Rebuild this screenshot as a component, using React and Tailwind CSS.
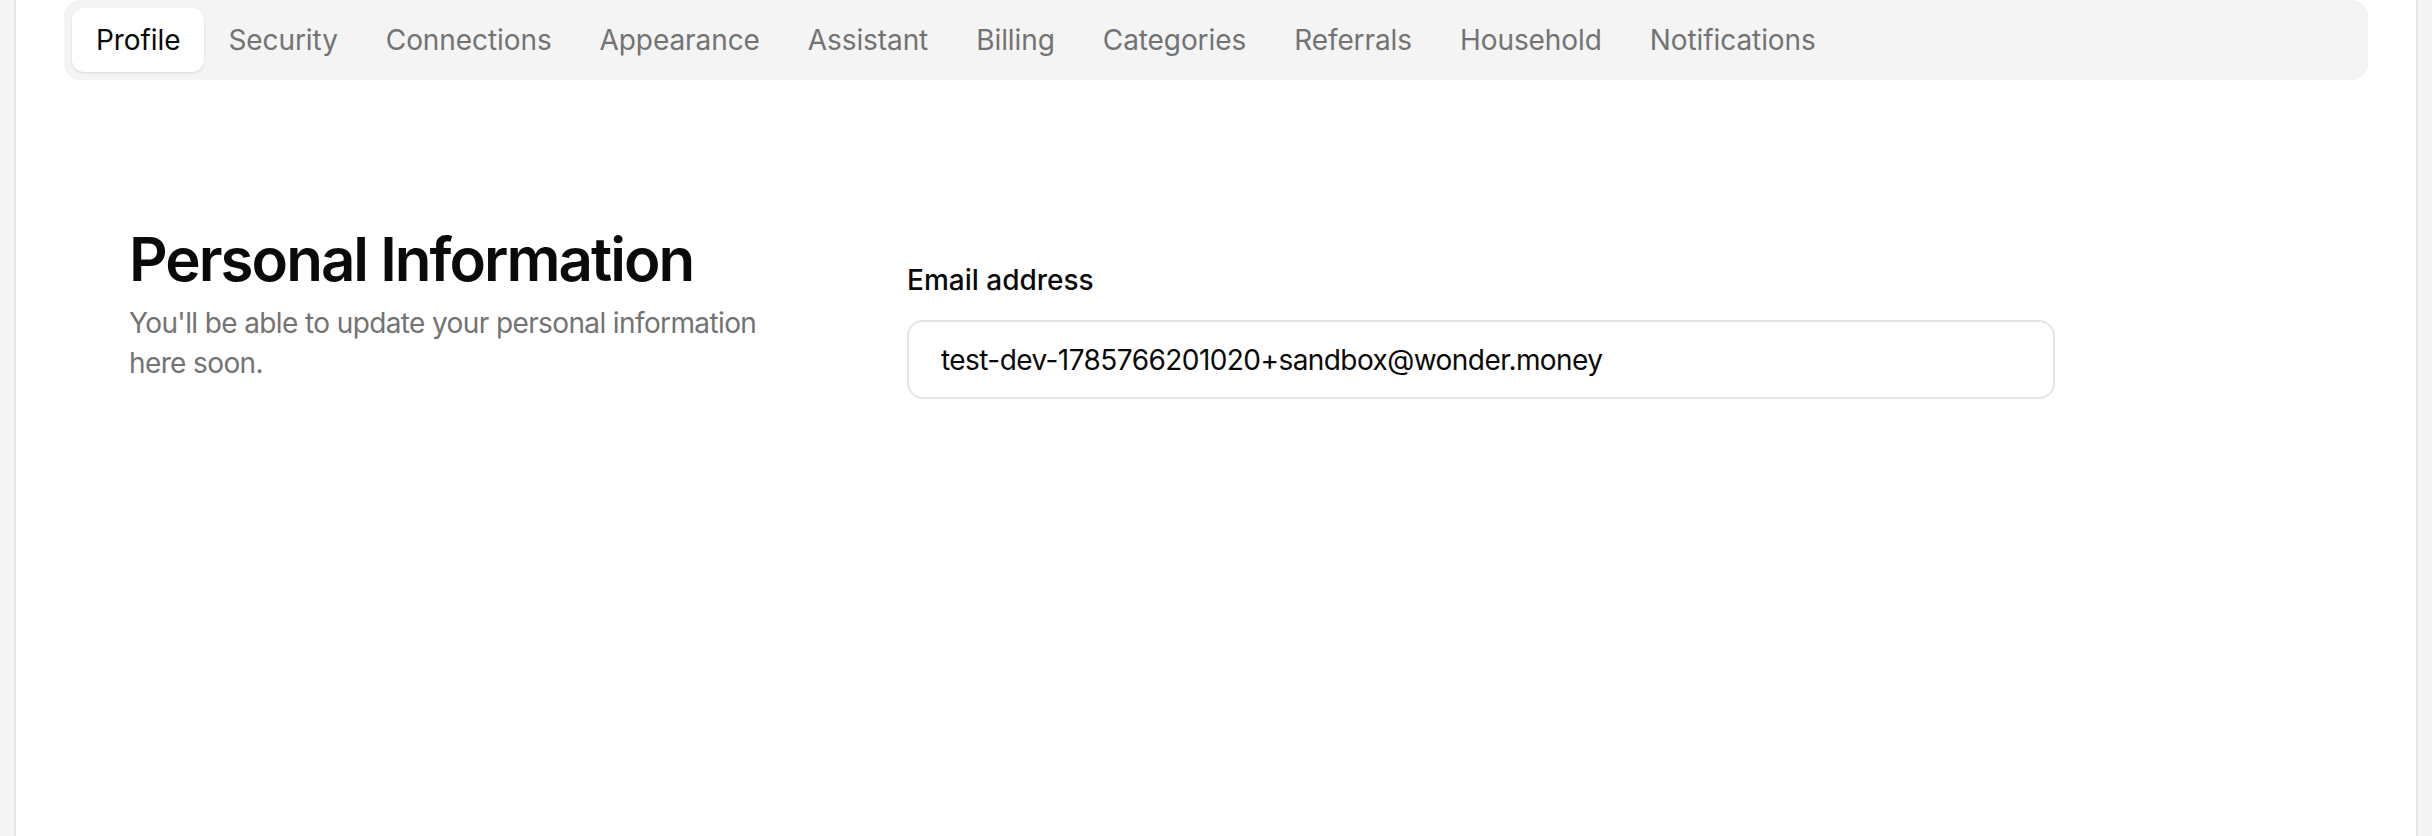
import clsx from 'clsx';

const tabs = [
  'Profile',
  'Security',
  'Connections',
  'Appearance',
  'Assistant',
  'Billing',
  'Categories',
  'Referrals',
  'Household',
  'Notifications',
];

export default function App() {
  return (
    <div className="min-h-[836px] bg-[#f4f4f4] px-[14px] font-['Inter',sans-serif] antialiased">
      <div className="min-h-[836px] border-x-2 border-[#e6e6e6] bg-white px-12">
        {/* Settings tabs */}
        <nav className="flex rounded-2xl bg-[#f4f4f4] p-2">
          {tabs.map((t, i) => (
            <button
              key={t}
              className={clsx(
                'h-16 rounded-xl px-6 text-[28px] leading-10 tracking-[-0.003em]',
                i === 0 ? 'bg-white text-[#0a0a0a] shadow-sm' : 'text-[#737373]'
              )}
            >
              {t}
            </button>
          ))}
        </nav>

        <section className="flex gap-[98px] pl-[65px] pt-[143px]">
          <div className="w-[680px]">
            <h2 className="text-[60px] font-semibold leading-[72px] tracking-[-0.033em] text-[#0a0a0a]">
              Personal Information
            </h2>
            <p className="mt-2 text-[28px] leading-10 tracking-[-0.022em] text-[#737373]">
              You'll be able to update your personal information here soon.
            </p>
          </div>
          <div className="w-[1148px] pt-[33px]">
            <label htmlFor="email" className="block text-[28px] font-medium leading-[48px] text-[#0a0a0a]">
              Email address
            </label>
            <input
              id="email"
              readOnly
              value="test-dev-1785766201020+sandbox@wonder.money"
              className="mt-4 h-[79px] w-full rounded-2xl border-2 border-[#e5e5e5] px-8 text-[28px] tracking-[-0.02em] text-[#0a0a0a] outline-none"
            />
          </div>
        </section>
      </div>
    </div>
  );
}
